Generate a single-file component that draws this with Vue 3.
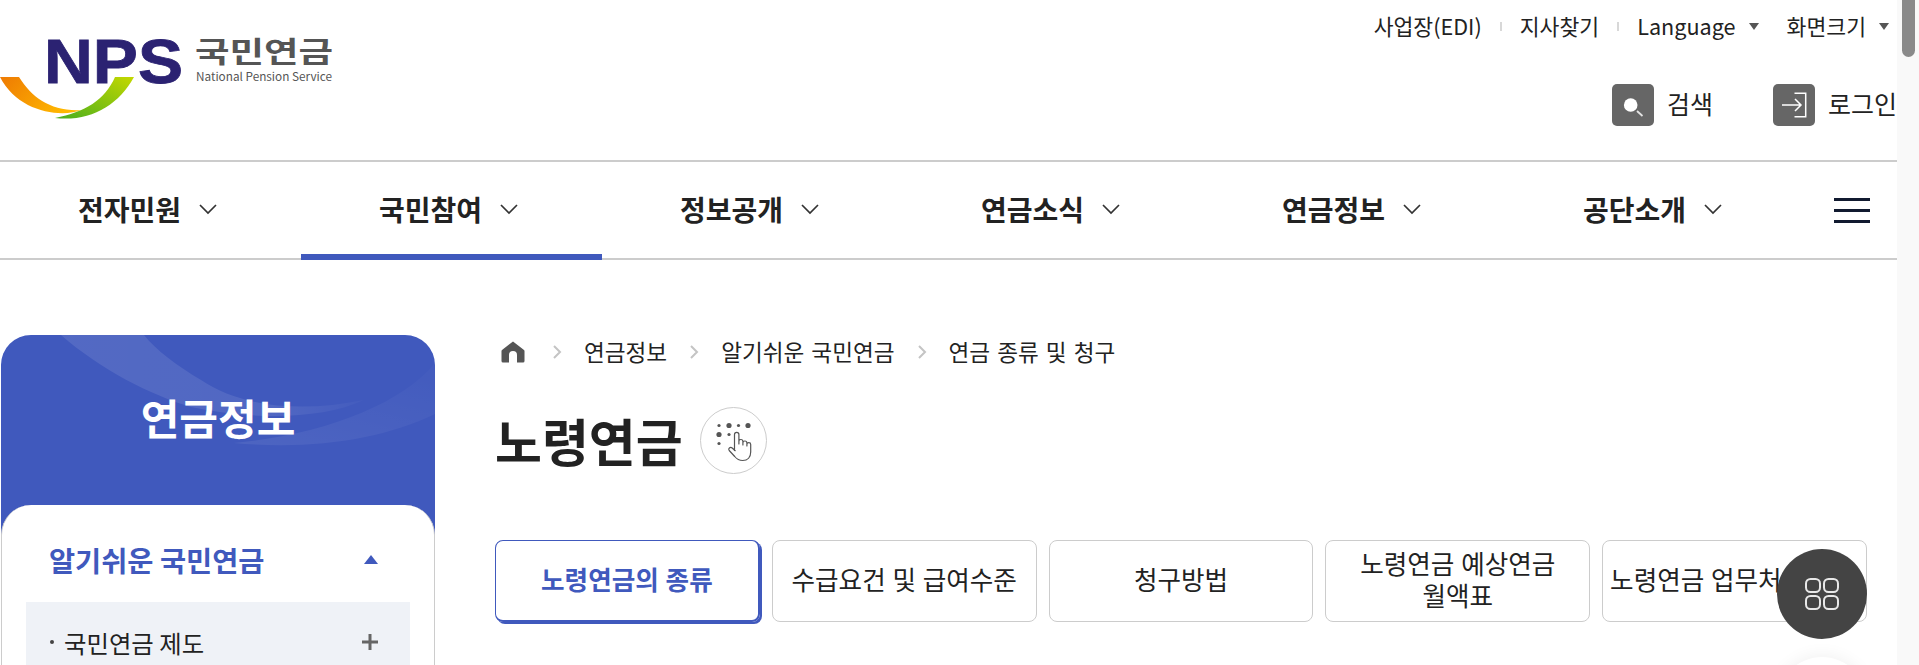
<template>
  <div class="screen">
    <div class="page">
      <header class="header">
        <a class="logo" href="#">
          <svg width="340" height="125" viewBox="0 0 340 125">
            <defs>
              <linearGradient id="swooshOrange" x1="0" y1="0" x2="1" y2="0.4">
                <stop offset="0" stop-color="#ee7a03" />
                <stop offset="1" stop-color="#ffb800" />
              </linearGradient>
              <linearGradient id="swooshGreen" x1="0" y1="1" x2="1" y2="0">
                <stop offset="0" stop-color="#49ae1e" />
                <stop offset="1" stop-color="#c4d800" />
              </linearGradient>
            </defs>
            <path d="M0 77 L19 77 C32 98 52 112 82 110 C60 118 18 112 0 77 Z" fill="url(#swooshOrange)" />
            <path d="M55 118 C85 112 105 100 115 77 L134 77 C118 106 90 122 55 118 Z" fill="url(#swooshGreen)" />
            <text class="logo-nps" x="44" y="83" textLength="139" lengthAdjust="spacingAndGlyphs">NPS</text>
            <text class="logo-ko" x="195" y="63" textLength="138" lengthAdjust="spacingAndGlyphs">국민연금</text>
            <text class="logo-en" x="196" y="81" textLength="136" lengthAdjust="spacingAndGlyphs">National Pension Service</text>
          </svg>
        </a>
        <div class="header-right">
          <ul class="util">
            <li v-for="(item, i) in utilLinks" :key="item.label" class="util-item">
              <i v-if="i === 1 || i === 2" class="util-sep"></i>
              <span>{{ item.label }}</span>
              <i v-if="item.drop" class="util-caret"></i>
            </li>
          </ul>
          <div class="actions">
            <a class="action" href="#">
              <span class="action-icon">
                <svg width="42" height="42" viewBox="0 0 42 42">
                  <circle cx="18.7" cy="21" r="6.8" fill="#fff" />
                  <path d="M25 27 L30.5 32" stroke="#e4e4e4" stroke-width="1.8" />
                </svg>
              </span>
              <span class="action-text">검색</span>
            </a>
            <a class="action" href="#">
              <span class="action-icon">
                <svg width="42" height="42" viewBox="0 0 42 42" fill="none" stroke="#fff" stroke-width="1.5">
                  <path d="M9 21 H28 M22 15 L28 21 L22 27" />
                  <path d="M21.5 9.3 H32.7 V32.7 H21.5" />
                </svg>
              </span>
              <span class="action-text">로그인</span>
            </a>
          </div>
        </div>
      </header>

      <nav class="gnb">
        <a
          v-for="item in navItems"
          :key="item"
          href="#"
          class="gnb-item"
          :class="{ active: item === '국민참여' }"
        >
          {{ item }}
          <svg width="20" height="12" viewBox="0 0 20 12" fill="none" stroke="#333" stroke-width="1.7">
            <path d="M2 2 L10 10 L18 2" />
          </svg>
        </a>
        <button class="hamburger"><span></span><span></span><span></span></button>
      </nav>

      <div class="content">
        <aside class="side">
          <svg class="side-waves" width="434" height="170" viewBox="0 0 434 170">
            <defs>
              <linearGradient id="waveOne" x1="0" y1="0" x2="1" y2="0">
                <stop offset="0" stop-color="#fff" stop-opacity="0.1" />
                <stop offset="0.7" stop-color="#fff" stop-opacity="0.09" />
                <stop offset="1" stop-color="#fff" stop-opacity="0.02" />
              </linearGradient>
              <linearGradient id="waveTwo" x1="0" y1="1" x2="0.6" y2="0">
                <stop offset="0" stop-color="#fff" stop-opacity="0.07" />
                <stop offset="1" stop-color="#fff" stop-opacity="0.02" />
              </linearGradient>
            </defs>
            <path d="M60 0 C100 35 150 60 190 72 C250 85 320 85 363 65 C300 78 240 72 200 45 C175 30 155 15 143 0 Z" fill="url(#waveOne)" />
            <path d="M233 108 C310 115 380 105 434 79 L434 28 C400 70 320 100 233 108 Z" fill="url(#waveTwo)" />
          </svg>
          <h2 class="side-title">연금정보</h2>
          <div class="side-panel">
            <div class="side-head">
              <span>알기쉬운 국민연금</span>
              <i class="side-caret"></i>
            </div>
            <div class="side-sub">
              <span class="side-dot"></span>
              <span class="side-sub-text">국민연금 제도</span>
              <svg width="18" height="18" viewBox="0 0 18 18" stroke="#666" stroke-width="3">
                <path d="M9 1 V17 M1 9 H17" />
              </svg>
            </div>
          </div>
        </aside>

        <main class="main">
          <div class="crumbs">
            <svg class="crumb-home" width="24" height="22" viewBox="0 0 24 22">
              <path d="M12 0.5 L23 9 a1.5 1.5 0 0 1 0.5 1 V20 a1.5 1.5 0 0 1 -1.5 1.5 H16 V14 a4 4 0 0 0 -8 0 V21.5 H2 a1.5 1.5 0 0 1 -1.5 -1.5 V10 a1.5 1.5 0 0 1 0.5 -1 Z" fill="#555" />
            </svg>
            <template v-for="crumb in crumbs" :key="crumb">
              <svg width="10" height="16" viewBox="0 0 10 16" fill="none" stroke="#c4c4c4" stroke-width="2">
                <path d="M2 2 L8 8 L2 14" />
              </svg>
              <span class="crumb-text">{{ crumb }}</span>
            </template>
          </div>

          <div class="title-row">
            <h1 class="title">노령연금</h1>
            <button class="braille">
              <svg width="66" height="66" viewBox="0 0 66 66" fill="#555">
                <circle cx="18" cy="17.5" r="1.6" />
                <circle cx="28" cy="17.5" r="2.6" />
                <circle cx="37.5" cy="17.5" r="1.6" />
                <circle cx="47" cy="17.5" r="2.6" />
                <circle cx="18" cy="26.5" r="2.6" />
                <circle cx="28" cy="26.5" r="1.6" />
                <circle cx="18" cy="35.5" r="1.6" />
                <path
                  d="M33.5 43 V26.5 a2.2 2.2 0 0 1 4.4 0 V36 V33.5 a2 2 0 0 1 4 0 V37 V35 a2 2 0 0 1 4 0 V38 V36.5 a1.9 1.9 0 0 1 3.8 0 V44 c0 5 -3 8.5 -8 8.5 c-4 0 -6 -1.5 -8 -4 l-5.5 -6 c-1.5 -2 1 -4 3 -2.5 l3.3 3"
                  fill="#fff"
                  stroke="#555"
                  stroke-width="1.2"
                  stroke-linejoin="round"
                />
              </svg>
            </button>
          </div>

          <div class="tabs">
            <a
              v-for="(tab, i) in tabs"
              :key="tab"
              href="#"
              class="tab"
              :class="{ active: i === 0 }"
            >{{ tab }}</a>
          </div>
        </main>
      </div>

      <button class="quick">
        <svg width="36" height="34" viewBox="0 0 36 34" fill="none" stroke="#e8e8e8" stroke-width="2">
          <rect x="2" y="2" width="14" height="13" rx="4.5" />
          <rect x="20" y="2" width="14" height="13" rx="4.5" />
          <rect x="2" y="19" width="14" height="13" rx="4.5" />
          <rect x="20" y="19" width="14" height="13" rx="4.5" />
        </svg>
      </button>
      <div class="quick-next"></div>
    </div>

    <div class="scrollbar"><div class="scrollbar-thumb"></div></div>
  </div>
</template>

<script setup>
const utilLinks = [
  { label: "사업장(EDI)" },
  { label: "지사찾기" },
  { label: "Language", drop: true },
  { label: "화면크기", drop: true },
];

const navItems = ["전자민원", "국민참여", "정보공개", "연금소식", "연금정보", "공단소개"];

const crumbs = ["연금정보", "알기쉬운 국민연금", "연금 종류 및 청구"];

const tabs = [
  "노령연금의 종류",
  "수급요건 및 급여수준",
  "청구방법",
  "노령연금 예상연금 월액표",
  "노령연금 업무처리 절차",
];
</script>

<style>
html,
body {
  margin: 0;
  overflow: hidden;
  background: #fff;
}
</style>

<style scoped>
* {
  box-sizing: border-box;
}

.screen {
  display: flex;
  height: 665px;
  overflow: hidden;
  font-family: "Noto Sans CJK KR", "Noto Sans", sans-serif;
  color: #222;
}

.page {
  position: relative;
  width: 1897px;
  height: 665px;
  overflow: hidden;
}

a {
  color: inherit;
  text-decoration: none;
}

button {
  border: 0;
  padding: 0;
  background: none;
  font: inherit;
}

/* header */
.header {
  display: flex;
  justify-content: space-between;
  height: 160px;
}

.logo svg {
  display: block;
}

.logo-nps {
  font-family: "Liberation Sans", sans-serif;
  font-weight: 700;
  font-size: 63px;
  fill: #2b2272;
  stroke: #2b2272;
  stroke-width: 0.8px;
}

.logo-ko {
  font-weight: 700;
  font-size: 29px;
  fill: #555;
}

.logo-en {
  font-size: 11.5px;
  fill: #555;
}

.header-right {
  display: flex;
  flex-direction: column;
  align-items: flex-end;
}

.util {
  display: flex;
  margin: 11px 8px 0 0;
  padding: 0;
  list-style: none;
  font-size: 21.6px;
  line-height: 30px;
}

.util-item {
  display: flex;
  align-items: center;
}

.util-sep {
  width: 2px;
  height: 9px;
  margin: 0 18px;
  background: #d8d8d8;
}

.util-caret {
  margin: 0 0 0 13px;
  border-top: 7px solid #555;
  border-left: 5px solid transparent;
  border-right: 5px solid transparent;
}

.util-item:nth-child(3) .util-caret {
  margin-right: 28px;
}

.actions {
  display: flex;
  gap: 60px;
  margin-top: 43px;
}

.action {
  display: flex;
  align-items: center;
  gap: 13px;
  font-size: 25px;
  line-height: 42px;
}

.action-icon {
  display: block;
  width: 42px;
  height: 42px;
  border-radius: 5px;
  background: #666;
}

.action-text {
  margin-top: -5px;
}

/* nav */
.gnb {
  display: flex;
  align-items: stretch;
  height: 100px;
  border-top: 2px solid #ccc;
  border-bottom: 2px solid #ccc;
}

.gnb-item {
  position: relative;
  display: flex;
  align-items: center;
  justify-content: center;
  gap: 17px;
  width: 301px;
  padding: 0 5px 2px 0;
  font-size: 28px;
  font-weight: 700;
}

.gnb-item.active::after {
  content: "";
  position: absolute;
  left: 0;
  right: 0;
  bottom: -2px;
  height: 6px;
  background: #4059bd;
}

.hamburger {
  display: flex;
  flex-direction: column;
  justify-content: center;
  gap: 8px;
  margin-left: 28px;
  width: 36px;
}

.hamburger span {
  display: block;
  height: 3px;
  background: #111a30;
}

/* content */
.content {
  display: flex;
  gap: 60px;
  padding: 75px 30px 0 1px;
}

.side {
  position: relative;
  flex: none;
  width: 434px;
  height: 400px;
  border-radius: 30px 30px 0 0;
  background: #4059bd;
}

.side-waves {
  position: absolute;
  left: 0;
  top: 0;
  border-radius: 30px 30px 0 0;
}

.side-title {
  position: relative;
  height: 170px;
  margin: 0;
  padding-top: 52px;
  font-size: 42px;
  line-height: 60px;
  font-weight: 700;
  text-align: center;
  color: #fff;
}

.side-panel {
  position: relative;
  height: 230px;
  padding: 0 24px;
  border: 1px solid #ccc;
  border-bottom: 0;
  border-top: 0;
  border-radius: 30px 30px 0 0;
  background: #fff;
}

.side-head {
  display: flex;
  align-items: center;
  justify-content: space-between;
  height: 97px;
  padding: 30px 32px 18px 23px;
  font-size: 28.4px;
  font-weight: 700;
  color: #4059bd;
}

.side-caret {
  border-bottom: 9px solid #4059bd;
  border-left: 7px solid transparent;
  border-right: 7px solid transparent;
}

.side-sub {
  display: flex;
  align-items: center;
  height: 80px;
  padding: 0 31px 0 24px;
  background: #eff2f7;
  font-size: 24.4px;
}

.side-dot {
  width: 4px;
  height: 4px;
  margin-right: 10px;
  border-radius: 50%;
  background: #444;
}

.side-sub-text {
  flex: 1;
}

/* main */
.main {
  flex: 1;
  min-width: 0;
}

.crumbs {
  display: flex;
  align-items: center;
  gap: 22px;
  height: 34px;
  padding-left: 6px;
  font-size: 22.6px;
  word-spacing: 2px;
}

.crumb-home {
  margin-right: 5px;
}

.crumb-text {
  margin-top: -2px;
}

.title-row {
  display: flex;
  align-items: center;
  gap: 17px;
  margin-top: 38px;
}

.title {
  margin: 0;
  font-size: 51px;
  line-height: 67px;
  font-weight: 700;
}

.braille {
  flex: none;
  width: 67px;
  height: 67px;
  border: 1px solid #ccc;
  border-radius: 50%;
}

.braille svg {
  display: block;
}

.tabs {
  display: grid;
  grid-template-columns: repeat(5, 1fr);
  gap: 12px;
  margin-top: 66px;
}

.tab {
  display: flex;
  align-items: center;
  justify-content: center;
  height: 82px;
  padding: 0 3px 4px;
  border: 1px solid #ccc;
  border-radius: 8px;
  font-size: 25.6px;
  line-height: 32px;
  word-spacing: 1px;
  text-align: center;
  word-break: keep-all;
}

.tab.active {
  border: 1px solid #4059bd;
  border-right-width: 2px;
  border-bottom-width: 2px;
  box-shadow: 2px 2px 0 #4059bd;
  color: #4059bd;
  font-weight: 700;
}

/* floating buttons */
.quick {
  position: absolute;
  right: 30px;
  top: 549px;
  display: flex;
  align-items: center;
  justify-content: center;
  width: 90px;
  height: 90px;
  border-radius: 50%;
  background: #444;
}

.quick-next {
  position: absolute;
  right: 30px;
  top: 657px;
  width: 90px;
  height: 90px;
  border-radius: 50%;
  background: #fff;
  box-shadow: 0 0 18px rgba(0, 0, 0, 0.07);
}

/* scrollbar */
.scrollbar {
  flex: none;
  width: 22px;
  height: 665px;
  background: #f9f9f9;
}

.scrollbar-thumb {
  width: 13px;
  height: 57px;
  margin-left: 5px;
  border-radius: 0 0 7px 7px;
  background: #8a8a8a;
}
</style>
